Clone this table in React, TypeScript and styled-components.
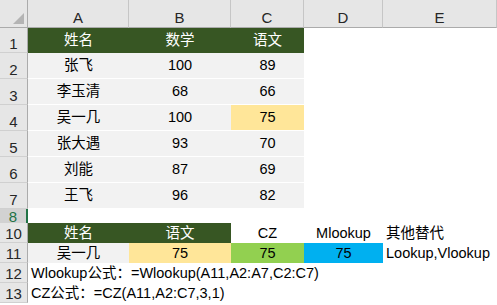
import React from 'react'
import styled, { createGlobalStyle, css } from 'styled-components'

const GlobalStyle = createGlobalStyle`
  html, body {
    margin: 0;
    padding: 0;
    background: #ffffff;
  }
  body {
    font-family: "Liberation Sans", "Noto Sans CJK SC", sans-serif;
    font-size: 14.5px;
    color: #000;
  }
`

const COLS = '28px 101px 102px 73px 79px 1fr'

const Sheet = styled.div`
  width: 497px;
  height: 305px;
  overflow: hidden;
  background: #fff;
`

const Row = styled.div<{ $h: number }>`
  display: grid;
  grid-template-columns: ${COLS};
  height: ${(p) => p.$h}px;
`

const Corner = styled.div`
  position: relative;
  background: #e6e6e6;
  border-right: 1px solid #ababab;
  border-bottom: 1px solid #ababab;
  &::after {
    content: '';
    position: absolute;
    right: 3px;
    bottom: 3px;
    width: 0;
    height: 0;
    border-left: 11px solid transparent;
    border-bottom: 11px solid #b4b4b4;
  }
`

const ColHead = styled.div`
  display: flex;
  align-items: flex-end;
  justify-content: center;
  padding-bottom: 2px;
  background: #e6e6e6;
  border-right: 1px solid #c6c6c6;
  border-bottom: 1px solid #ababab;
  color: #262626;
  line-height: 1;
  font-size: 15px;
`

const RowHead = styled.div<{ $active?: boolean; $hidden?: boolean }>`
  display: flex;
  align-items: flex-end;
  justify-content: center;
  padding-bottom: 1px;
  background: #e6e6e6;
  border-right: 1px solid #ababab;
  border-bottom: 1px solid #d0d0d0;
  color: #262626;
  font-size: 15px;
  line-height: 1;
  ${(p) =>
    p.$active &&
    css`
      background: #d2d2d2;
      color: #217346;
      border-right: 2px solid #217346;
    `}
  ${(p) =>
    p.$hidden &&
    css`
      border-bottom: 3px double #9a9a9a;
    `}
`

const Cell = styled.div<{
  $fill?: string
  $color?: string
  $align?: 'left' | 'center'
  $line?: boolean
  $span?: number
}>`
  display: flex;
  align-items: center;
  justify-content: ${(p) => (p.$align === 'left' ? 'flex-start' : 'center')};
  padding: 0 ${(p) => (p.$align === 'left' ? '0 0 3px' : '0')};
  padding-top: 1px;
  background: ${(p) => p.$fill || 'transparent'};
  color: ${(p) => p.$color || '#000'};
  border-bottom: ${(p) => (p.$line ? '1px solid #ffffff' : 'none')};
  white-space: nowrap;
  overflow: visible;
  line-height: 1.2;
  ${(p) => p.$span && css`grid-column: span ${p.$span};`}
`

const GREEN_DARK = '#375623'
const GRAY = '#f2f2f2'
const YELLOW = '#ffe699'
const GREEN = '#92d050'
const BLUE = '#00b0f0'

const scores = [
  { name: '张飞', math: '100', chinese: '89' },
  { name: '李玉清', math: '68', chinese: '66' },
  { name: '吴一几', math: '100', chinese: '75', hit: true },
  { name: '张大遇', math: '93', chinese: '70' },
  { name: '刘能', math: '87', chinese: '69' },
  { name: '王飞', math: '96', chinese: '82' },
]

const App = () => {
  return (
    <Sheet>
      <GlobalStyle />
      <Row $h={28}>
        <Corner />
        {['A', 'B', 'C', 'D', 'E'].map((c) => (
          <ColHead key={c}>{c}</ColHead>
        ))}
      </Row>

      <Row $h={25}>
        <RowHead>1</RowHead>
        <Cell $fill={GREEN_DARK} $color="#fff">姓名</Cell>
        <Cell $fill={GREEN_DARK} $color="#fff">数学</Cell>
        <Cell $fill={GREEN_DARK} $color="#fff">语文</Cell>
        <Cell />
        <Cell />
      </Row>

      {scores.map((s, i) => (
        <Row $h={26} key={s.name}>
          <RowHead>{i + 2}</RowHead>
          <Cell $fill={GRAY} $line>{s.name}</Cell>
          <Cell $fill={GRAY} $line>{s.math}</Cell>
          <Cell $fill={s.hit ? YELLOW : GRAY} $line>{s.chinese}</Cell>
          <Cell />
          <Cell />
        </Row>
      ))}

      <Row $h={14}>
        <RowHead $active $hidden>8</RowHead>
        <Cell $span={5} />
      </Row>

      <Row $h={20}>
        <RowHead>10</RowHead>
        <Cell $fill={GREEN_DARK} $color="#fff">姓名</Cell>
        <Cell $fill={GREEN_DARK} $color="#fff">语文</Cell>
        <Cell>CZ</Cell>
        <Cell>Mlookup</Cell>
        <Cell $align="left">其他替代</Cell>
      </Row>

      <Row $h={20}>
        <RowHead>11</RowHead>
        <Cell $fill={GRAY}>吴一几</Cell>
        <Cell $fill={YELLOW}>75</Cell>
        <Cell $fill={GREEN}>75</Cell>
        <Cell $fill={BLUE}>75</Cell>
        <Cell $align="left">Lookup,Vlookup</Cell>
      </Row>

      <Row $h={20}>
        <RowHead>12</RowHead>
        <Cell $align="left" $span={5}>Wlookup公式：=Wlookup(A11,A2:A7,C2:C7)</Cell>
      </Row>

      <Row $h={20}>
        <RowHead>13</RowHead>
        <Cell $align="left" $span={5}>CZ公式：=CZ(A11,A2:C7,3,1)</Cell>
      </Row>
    </Sheet>
  )
}

export default App
